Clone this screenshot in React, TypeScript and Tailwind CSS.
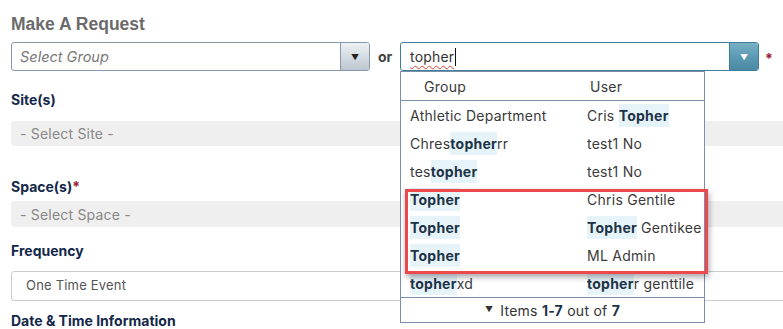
interface Part {
  text: string;
  hit?: boolean;
}

interface Row {
  group: Part[];
  user: Part[];
}

const rows: Row[] = [
  { group: [{ text: 'Athletic Department' }], user: [{ text: 'Cris ' }, { text: 'Topher', hit: true }] },
  { group: [{ text: 'Chres' }, { text: 'topher', hit: true }, { text: 'rr' }], user: [{ text: 'test1 No' }] },
  { group: [{ text: 'tes' }, { text: 'topher', hit: true }], user: [{ text: 'test1 No' }] },
  { group: [{ text: 'Topher', hit: true }], user: [{ text: 'Chris Gentile' }] },
  { group: [{ text: 'Topher', hit: true }], user: [{ text: 'Topher', hit: true }, { text: ' Gentikee' }] },
  { group: [{ text: 'Topher', hit: true }], user: [{ text: 'ML Admin' }] },
  { group: [{ text: 'topher', hit: true }, { text: 'xd' }], user: [{ text: 'topher', hit: true }, { text: 'r genttile' }] },
];

function Parts({ parts }: { parts: Part[] }) {
  return (
    <span className="whitespace-pre">
      {parts.map((p, i) =>
        p.hit ? (
          <span key={i} className="bg-[#e6f3f9] font-bold text-[#1d3347] py-[3px]">{p.text}</span>
        ) : (
          <span key={i}>{p.text}</span>
        )
      )}
    </span>
  );
}

function Label({ text, required }: { text: string; required?: boolean }) {
  return (
    <div className="h-5 leading-5 text-[14px] font-bold text-[#14284a]">
      {text}
      {required && <span className="text-[#9b1b30]">*</span>}
    </div>
  );
}

export default function App() {
  return (
    <div
      className="relative w-[783px] h-[329px] overflow-hidden bg-white"
      style={{ fontFamily: 'Inter, "Noto Sans", sans-serif' }}
    >
      <div className="pl-[11px] w-[820px]">
        {/* Title */}
        <h1
          className="mt-[13px] h-[22px] leading-[22px] text-[17.5px] font-bold text-[#6b6b6b]"
          style={{ fontFamily: '"Liberation Sans", Arial, sans-serif' }}
        >
          Make A Request
        </h1>

        {/* Group / user pickers */}
        <div className="mt-[7px] flex items-center h-[29px]">
          <div className="flex w-[359px] h-[29px] border border-[#8797ab] rounded-[3px] overflow-hidden bg-white">
            <div className="flex-1 flex items-center pl-2 text-[14.5px] italic text-[#777]">Select Group</div>
            <div className="w-[29px] border-l border-[#8797ab] bg-gradient-to-b from-[#eef1f4] to-[#bcc7d1] flex items-center justify-center">
              <span className="text-[8px] text-[#222] leading-none">▼</span>
            </div>
          </div>
          <span className="ml-[8px] w-[22px] text-[14px] font-bold text-[#444]">or</span>
          <div className="flex w-[359px] h-[29px] border border-[#3f7f98] rounded-[3px] overflow-hidden bg-white">
            <div className="flex-1 flex items-center pl-[9px] text-[14px] tracking-[0.2px] text-[#333]">
              <span className="underline decoration-wavy decoration-[#e23a3a] decoration-1 underline-offset-[3px]">topher</span>
              <span className="ml-[1px] w-px h-[18px] bg-[#111]" />
            </div>
            <div className="w-[29px] border-l border-[#3f7f98] bg-gradient-to-b from-[#78b0c6] via-[#5c9ab4] to-[#4a88a3] flex items-center justify-center">
              <span className="text-[8px] text-white leading-none">▼</span>
            </div>
          </div>
          <span className="ml-[6px] self-start mt-[6px] text-[14px] font-bold text-[#9b1b30]">*</span>
        </div>

        {/* Site */}
        <div className="mt-[19px]">
          <Label text="Site(s)" />
        </div>
        <div className="mt-[11px] h-[25px] rounded-[4px] bg-[#efefef] flex items-center pl-[9px] text-[14px] tracking-[0.2px] text-[#888]">
          - Select Site -
        </div>

        {/* Space */}
        <div className="mt-[31px]">
          <Label text="Space(s)" required />
        </div>
        <div className="mt-[4px] h-[26px] rounded-[4px] bg-[#efefef] flex items-center pl-[9px] text-[14px] tracking-[0.2px] text-[#888]">
          - Select Space -
        </div>

        {/* Frequency */}
        <div className="mt-[14px]">
          <Label text="Frequency" />
        </div>
        <div className="mt-[10px] h-[30px] rounded-[3px] border border-[#cccccc] flex items-center pl-[14px] text-[13px] tracking-[0.2px] text-[#555]">
          One Time Event
        </div>

        <div className="mt-[10px]">
          <Label text="Date & Time Information" />
        </div>
      </div>

      {/* Autocomplete popup */}
      <div className="absolute left-[400px] top-[71px] w-[305px] border border-[#7b8fa8] bg-white text-[14px] tracking-[0.25px] text-[#3a3a3a]">
        <div className="flex h-[29px] items-center border-b border-[#7b8fa8]">
          <span className="pl-[23px] w-[189px]">Group</span>
          <span>User</span>
        </div>
        {rows.map((r, i) => (
          <div key={i} className="flex h-[28px] items-center">
            <div className="pl-[9px] w-[186px]">
              <Parts parts={r.group} />
            </div>
            <Parts parts={r.user} />
          </div>
        ))}
        <div className="flex h-[25px] items-center justify-center gap-[7px] border-t border-[#7b8fa8] text-[#333]">
          <span className="text-[8px] leading-none -mt-[3px]">▼</span>
          <span>
            Items <b className="text-[#1d3347]">1-7</b> out of <b className="text-[#1d3347]">7</b>
          </span>
        </div>
      </div>

      {/* Annotation box */}
      <div className="absolute left-[405px] top-[189px] w-[303px] h-[85px] border-[3px] border-[#ec484d] shadow-[1px_3px_6px_rgba(0,0,0,0.35)]" />
    </div>
  );
}
